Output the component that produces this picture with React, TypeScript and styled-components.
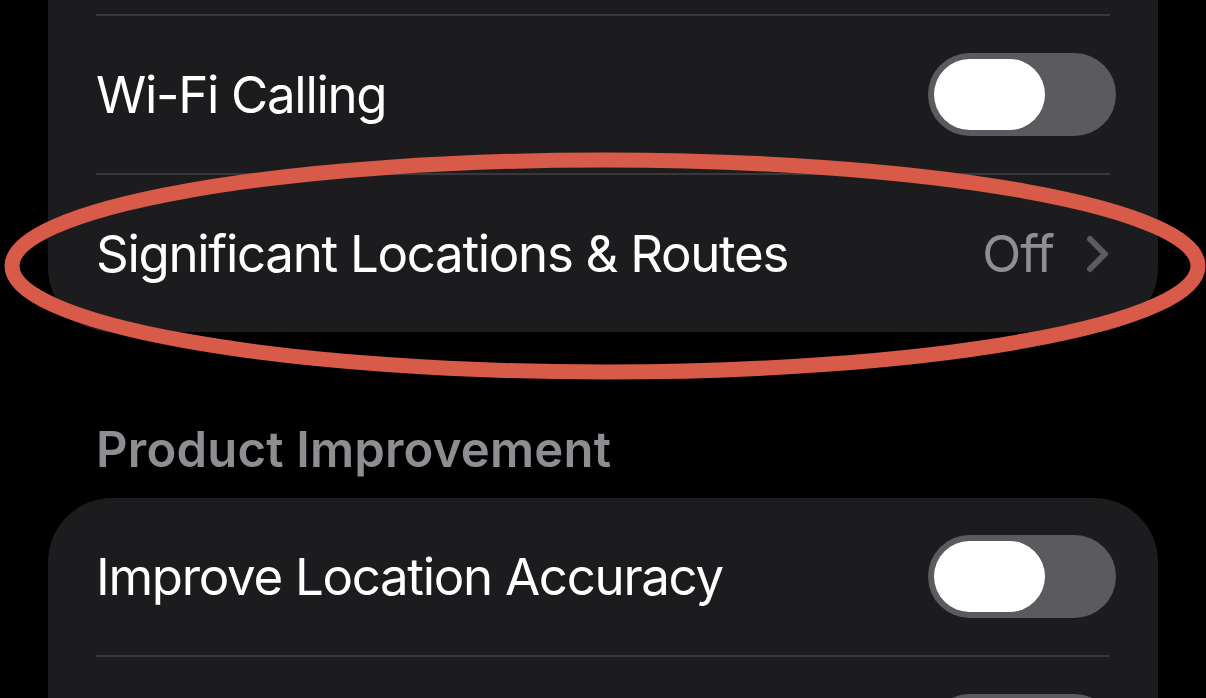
import styled, { createGlobalStyle } from 'styled-components'

const GlobalStyle = createGlobalStyle`
html, body {
    margin: 0;
    padding: 0;
    background: #000;
    overflow: hidden;
}
* { box-sizing: border-box; }
`

const Chevron = () => (
    <svg width="24" height="38" viewBox="0 0 24 38" fill="none">
        <polyline points="4,4 19,19 4,34" stroke="#5b5b60" strokeWidth="6" strokeLinecap="round" strokeLinejoin="round" />
    </svg>
)

const Toggle = () => (
    <Switch>
        <Knob />
    </Switch>
)

const App = () => {
    return (
        <Page>
            <GlobalStyle />
            <Card flatTop>
                <Divider />
                <Row>
                    <Label>Wi-Fi Calling</Label>
                    <Toggle />
                </Row>
                <Divider />
                <Row>
                    <Label>Significant Locations &amp; Routes</Label>
                    <Detail>
                        <Value>Off</Value>
                        <Chevron />
                    </Detail>
                </Row>
            </Card>

            <SectionHeader>Product Improvement</SectionHeader>

            <Card>
                <Row>
                    <Label>Improve Location Accuracy</Label>
                    <Toggle />
                </Row>
                <Divider />
                <Row>
                    <Label>&nbsp;</Label>
                    <Toggle />
                </Row>
            </Card>

            <Highlight width="1206" height="698" viewBox="0 0 1206 698">
                <ellipse cx="605" cy="266" rx="593" ry="106" fill="none" stroke="#d85a48" strokeWidth="15" />
            </Highlight>
        </Page>
    )
}

export default App

const Page = styled.div`
position: relative;
width: 1206px;
height: 698px;
overflow: hidden;
background: #000;
font-family: Inter, "Noto Sans", sans-serif;
`

const Card = styled.div<{ flatTop?: boolean }>`
margin: 0 48px;
background: #1c1c1e;
border-radius: ${(p) => (p.flatTop ? '0 0 64px 64px' : '64px')};
padding-top: ${(p) => (p.flatTop ? '14px' : '0')};
overflow: hidden;
`

const Divider = styled.div`
height: 2px;
margin: 0 48px;
background: #38383a;
`

const Row = styled.div`
height: 157px;
display: flex;
align-items: center;
justify-content: space-between;
padding: 0 42px 0 48px;
`

const Label = styled.div`
color: #fff;
font-size: 51px;
letter-spacing: -1.3px;
white-space: nowrap;
`

const Detail = styled.div`
display: flex;
align-items: center;
gap: 32px;
margin-right: 6px;
`

const Value = styled.div`
color: #8e8e93;
font-size: 51px;
letter-spacing: -1px;
`

const SectionHeader = styled.div`
padding: 88px 96px 18px;
line-height: 60px;
color: #8d8d92;
font-size: 49px;
font-weight: 600;
letter-spacing: 0.2px;
`

const Switch = styled.div`
width: 188px;
height: 83px;
border-radius: 42px;
background: #5b5b5f;
padding: 6px 6px;
display: flex;
`

const Knob = styled.div`
width: 111px;
height: 71px;
border-radius: 36px;
background: #fff;
`

const Highlight = styled.svg`
position: absolute;
left: 0;
top: 0;
pointer-events: none;
`
